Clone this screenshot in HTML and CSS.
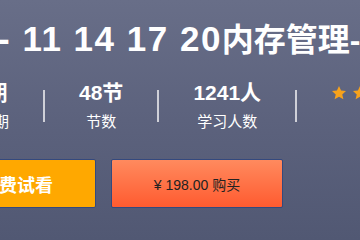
FILE: index.html
```html
<!DOCTYPE html>
<html lang="zh">
<head>
<meta charset="utf-8">
<link rel="stylesheet" href="styles.css">
</head>
<body>
<div class="page">
  <h1 class="title"><span class="title-num">- 11 14 17 20</span>内存管理-</h1>
  <div class="stats">
    <div class="stat stat-first">
      <div class="stat-value">长期</div>
      <div class="stat-label">有效期</div>
    </div>
    <span class="sep"></span>
    <div class="stat">
      <div class="stat-value">48节</div>
      <div class="stat-label">节数</div>
    </div>
    <span class="sep"></span>
    <div class="stat">
      <div class="stat-value">1241人</div>
      <div class="stat-label">学习人数</div>
    </div>
    <span class="sep"></span>
    <div class="stat">
      <div class="stars">
        <svg class="star" viewBox="0 0 24 24"><path d="M12 1.5l3.1 6.9 7.4.7-5.6 5 1.7 7.4L12 17.6l-6.6 3.9 1.7-7.4-5.6-5 7.4-.7z"/></svg>
        <svg class="star" viewBox="0 0 24 24"><path d="M12 1.5l3.1 6.9 7.4.7-5.6 5 1.7 7.4L12 17.6l-6.6 3.9 1.7-7.4-5.6-5 7.4-.7z"/></svg>
        <svg class="star" viewBox="0 0 24 24"><path d="M12 1.5l3.1 6.9 7.4.7-5.6 5 1.7 7.4L12 17.6l-6.6 3.9 1.7-7.4-5.6-5 7.4-.7z"/></svg>
      </div>
      <div class="stat-label">&nbsp;</div>
    </div>
  </div>
  <div class="actions">
    <a class="btn btn-trial">免费试看</a>
    <a class="btn btn-buy">¥ 198.00 购买</a>
  </div>
</div>
</body>
</html>
```
FILE: styles.css
```css
html, body {
  margin: 0;
  padding: 0;
}
body {
  width: 360px;
  height: 240px;
  overflow: hidden;
  background: linear-gradient(180deg, #686e88 0%, #5c627d 50%, #515873 100%);
  font-family: "Liberation Sans", "Noto Sans CJK SC", sans-serif;
  color: #fff;
}
.page {
  display: flex;
  flex-direction: column;
}
.title {
  margin: 0 0 0 -2px;
  padding-top: 23px;
  height: 32px;
  font-size: 32px;
  line-height: 32px;
  font-weight: bold;
  white-space: nowrap;
  color: #fff;
}
.title-num {
  font-size: 35px;
  letter-spacing: 1.5px;
}
.stats {
  display: flex;
  align-items: center;
  margin-top: 26px;
  margin-left: -70px;
  white-space: nowrap;
}
.stat {
  display: flex;
  flex-direction: column;
  align-items: center;
  padding: 0 34px;
  gap: 8px;
}
.stat-value {
  font-size: 21px;
  line-height: 24px;
  font-weight: bold;
}
.stat-label {
  font-size: 15px;
  line-height: 18px;
}
.sep {
  width: 2px;
  height: 32px;
  background: #cfd0d8;
  flex: none;
}
.stars {
  display: flex;
  gap: 5px;
  height: 24px;
  align-items: center;
  align-self: flex-start;
}
.star {
  width: 16px;
  height: 16px;
  fill: #f7a21b;
}
.actions {
  display: flex;
  gap: 15px;
  margin-top: 28px;
  margin-left: -62px;
}
.btn {
  display: flex;
  align-items: center;
  justify-content: center;
  height: 47px;
  border: 1px solid #34497e;
  border-radius: 2px;
  box-sizing: content-box;
  text-decoration: none;
}
.btn-trial {
  width: 156px;
  background: #ffa800;
  color: #fff;
  font-size: 18px;
  font-weight: bold;
}
.btn-buy {
  width: 170px;
  background: linear-gradient(180deg, #ff8a5e 0%, #ff5b30 100%);
  color: #222;
  font-size: 14px;
}
```
